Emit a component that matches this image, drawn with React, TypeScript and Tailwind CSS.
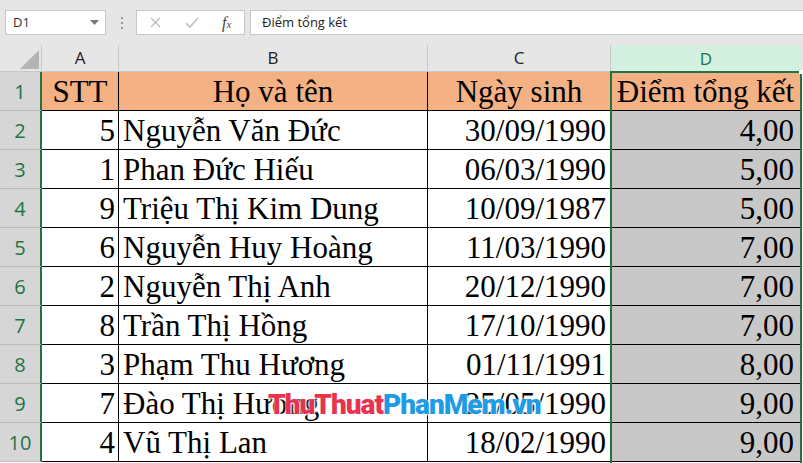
const rows: [string, string, string, string][] = [
  ['5', 'Nguyễn Văn Đức', '30/09/1990', '4,00'],
  ['1', 'Phan Đức Hiếu', '06/03/1990', '5,00'],
  ['9', 'Triệu Thị Kim Dung', '10/09/1987', '5,00'],
  ['6', 'Nguyễn Huy Hoàng', '11/03/1990', '7,00'],
  ['2', 'Nguyễn Thị Anh', '20/12/1990', '7,00'],
  ['8', 'Trần Thị Hồng', '17/10/1990', '7,00'],
  ['3', 'Phạm Thu Hương', '01/11/1991', '8,00'],
  ['7', 'Đào Thị Hương', '25/05/1990', '9,00'],
  ['4', 'Vũ Thị Lan', '18/02/1990', '9,00'],
]

const ui = "font-['Open_Sans',sans-serif]"
const serif = "font-['Liberation_Serif','Times_New_Roman',serif] text-[31px] text-black"

function Toolbar() {
  return (
    <div className={`flex h-[45px] items-start pt-[10px] bg-[#e6e6e6] ${ui}`}>
      <div className="ml-[5px] flex h-[25px] w-[101px] items-center justify-between border border-[#c6c6c6] bg-white pl-[7px] pr-[6px] text-[13px] text-[#333]">
        <span>D1</span>
        <svg width="9" height="5" viewBox="0 0 9 5">
          <path d="M0 0h9L4.5 5z" fill="#777" />
        </svg>
      </div>
      <div className="ml-[15px] mr-[13px] flex h-[25px] flex-col items-center justify-center gap-[3px]">
        <span className="h-[2px] w-[2px] bg-[#999]" />
        <span className="h-[2px] w-[2px] bg-[#999]" />
        <span className="h-[2px] w-[2px] bg-[#999]" />
      </div>
      <div className="flex h-[25px] w-[109px] items-center border border-[#c6c6c6] bg-white">
        <svg className="ml-[13px]" width="11" height="11" viewBox="0 0 11 11">
          <path d="M1 1l9 9M10 1l-9 9" stroke="#bdbdbd" strokeWidth="1.3" />
        </svg>
        <svg className="ml-[24px]" width="14" height="11" viewBox="0 0 14 11">
          <path d="M1 6l4 4 8-9" stroke="#bdbdbd" strokeWidth="1.6" fill="none" />
        </svg>
        <span className="ml-[23px] font-['Liberation_Serif',serif] text-[16px] italic text-[#444]">
          f<span className="text-[11px]">x</span>
        </span>
      </div>
      <div className="ml-[5px] flex h-[25px] flex-1 items-center border border-r-0 border-[#c6c6c6] bg-white pl-[11px] text-[13px] text-[#222]">
        Điểm tổng kết
      </div>
    </div>
  )
}

function ColHeader() {
  return (
    <div className={`flex h-[27px] bg-[#e6e6e6] text-[17px] text-[#222] ${ui}`}>
      <div className="relative w-[42px] border-b border-r border-[#c8c8c8]">
        <svg className="absolute left-[20px] top-[5px]" width="19" height="19" viewBox="0 0 19 19">
          <path d="M19 0v19H0z" fill="#b4b4b4" />
        </svg>
      </div>
      <div className="flex w-[77px] items-center justify-center border-b border-r border-[#c8c8c8]">A</div>
      <div className="flex w-[309px] items-center justify-center border-b border-r border-[#c8c8c8]">B</div>
      <div className="flex w-[183px] items-center justify-center border-b border-r border-[#c8c8c8]">C</div>
      <div className="flex w-[190px] items-center justify-center bg-[#d3f0e0] text-[#217346]">D</div>
      <div className="flex-1" />
    </div>
  )
}

function Row({ n, cells, head }: { n: number; cells: string[]; head?: boolean }) {
  const bg = head ? 'bg-[#f4b183]' : 'bg-white'
  return (
    <div className="flex h-[39px]">
      <div
        className={`flex w-[42px] items-center justify-center border-b border-r-2 border-b-[#bdbdbd] border-r-[#217346] bg-[#d6d6d6] pt-[1px] text-[20px] text-[#217346] ${ui}`}
      >
        {n}
      </div>
      <div
        className={`flex w-[77px] items-end border-b border-r border-black pb-[1px] leading-[34px] ${bg} ${serif} ${head ? 'justify-center' : 'justify-end pr-[3px]'}`}
      >
        {cells[0]}
      </div>
      <div
        className={`flex w-[309px] items-end border-b border-r border-black pb-[1px] leading-[34px] whitespace-nowrap ${bg} ${serif} ${head ? 'justify-center' : 'pl-[4px]'}`}
      >
        {cells[1]}
      </div>
      <div
        className={`flex w-[183px] items-end border-b border-r border-black pb-[1px] leading-[34px] ${bg} ${serif} ${head ? 'justify-center' : 'justify-end pr-[4px]'}`}
      >
        {cells[2]}
      </div>
      <div
        className={`flex w-[190px] items-end border-b border-r border-black pb-[1px] leading-[34px] whitespace-nowrap ${head ? 'bg-[#f4b183] justify-center' : 'bg-[#c8c8c8] justify-end pr-[6px]'} ${serif}`}
      >
        {cells[3]}
      </div>
      <div className="flex-1 border-b border-[#d4d4d4] bg-white" />
    </div>
  )
}

export default function App() {
  return (
    <div className="relative h-[463px] w-[803px] overflow-hidden bg-white">
      <Toolbar />
      <ColHeader />
      <Row n={1} head cells={['STT', 'Họ và tên', 'Ngày sinh', 'Điểm tổng kết']} />
      {rows.map((r, i) => (
        <Row key={i} n={i + 2} cells={r} />
      ))}

      {/* selection frame round column D */}
      <div className="pointer-events-none absolute left-[610px] top-[71px] h-[400px] w-[192px] border-2 border-[#217346]" />
      <div className="absolute left-[799px] top-[70px] h-[4px] w-[4px] bg-white" />

      {/* watermark */}
      <div className="pointer-events-none absolute left-[268px] top-[391px] whitespace-nowrap font-['Roboto',sans-serif] text-[28px] font-black leading-none tracking-[-1px] [text-shadow:0_0_2px_#fff,0_0_1px_#fff,1px_1px_2px_#fff]">
        <span className="text-[#e8324e]">ThuThuat</span>
        <span className="text-[#1d9be6]">PhanMem.vn</span>
      </div>
    </div>
  )
}
